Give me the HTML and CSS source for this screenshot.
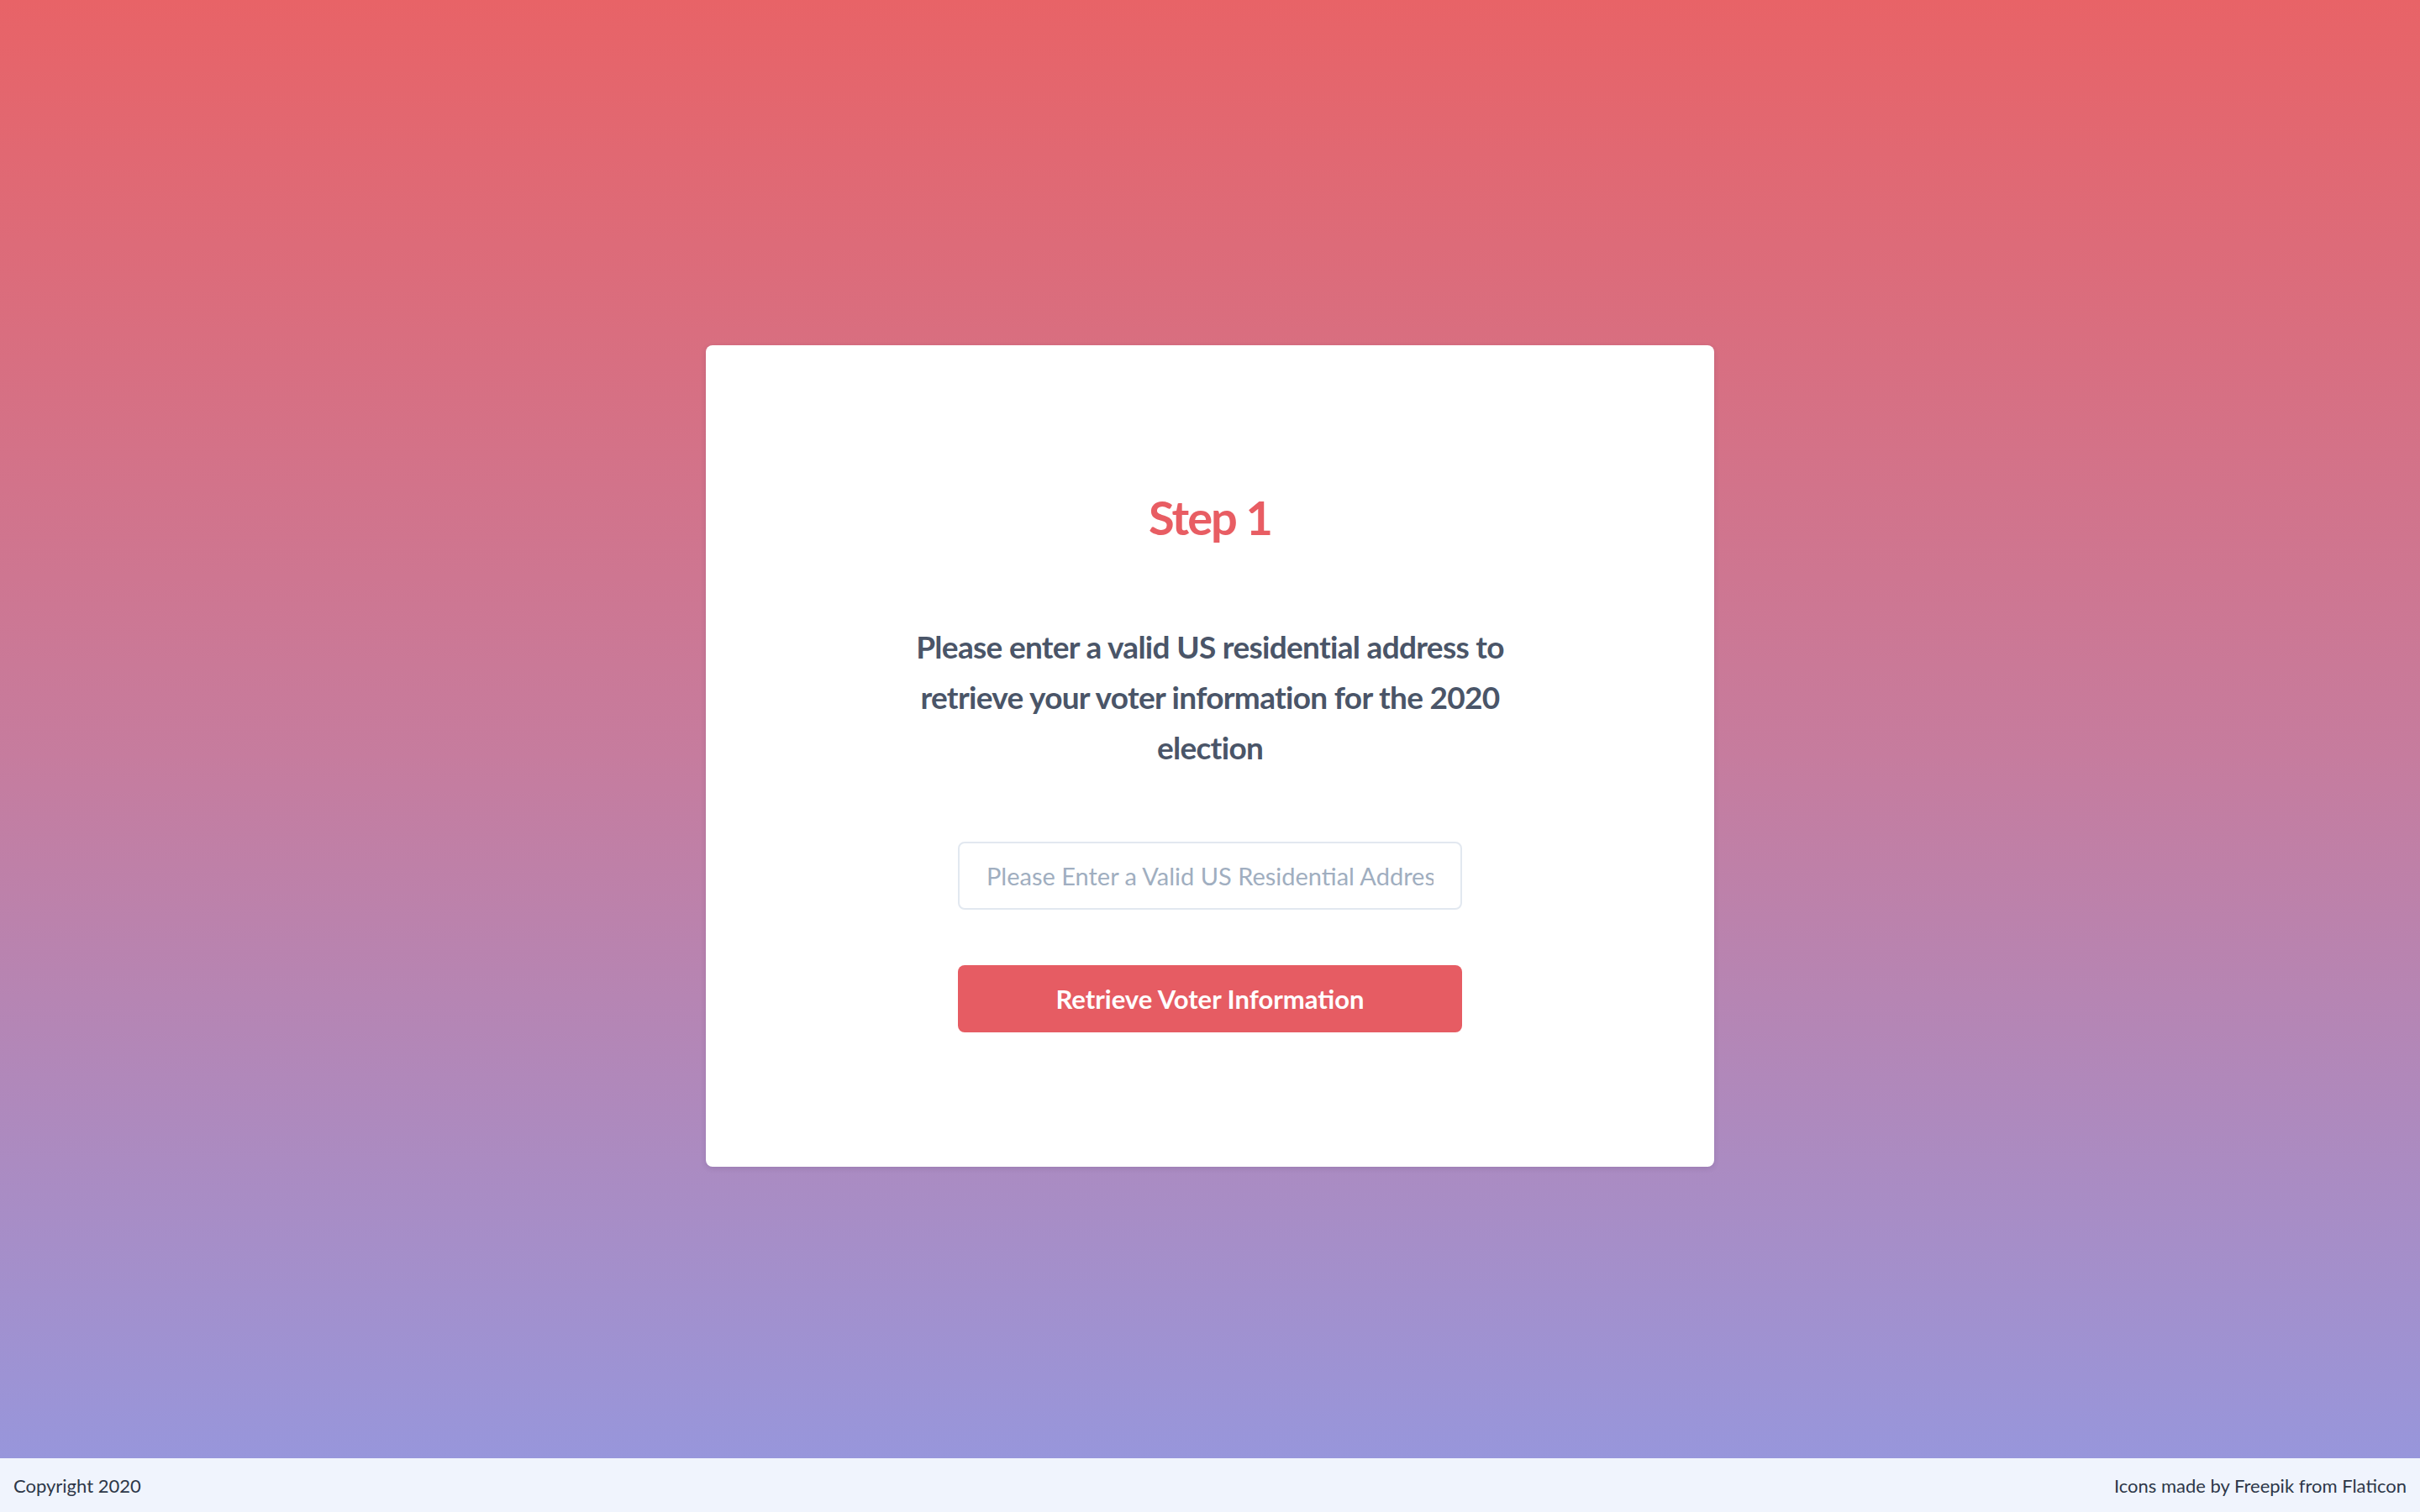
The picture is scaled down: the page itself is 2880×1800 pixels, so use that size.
FILE: index.html
```html
<!DOCTYPE html>
<html lang="en">
<head>
<meta charset="utf-8">
<title>Step 1</title>
<link rel="stylesheet" href="styles.css">
</head>
<body>
<main class="hero">
  <section class="card">
    <h1 class="card-title">Step 1</h1>
    <p class="card-text">Please enter a valid US residential address to retrieve your voter information for the 2020 election</p>
    <form class="card-form">
      <input class="address-input" type="text" placeholder="Please Enter a Valid US Residential Address">
      <button class="submit-btn" type="button">Retrieve Voter Information</button>
    </form>
  </section>
</main>
<footer class="footer">
  <span class="footer-text">Copyright 2020</span>
  <span class="footer-text">Icons made by Freepik from Flaticon</span>
</footer>
</body>
</html>
```
FILE: styles.css
```css
* { box-sizing: border-box; }
html, body { margin: 0; padding: 0; }
body {
  font-family: Lato, "Open Sans", sans-serif;
  min-height: 1800px;
}
.hero {
  height: 1800px;
  background: linear-gradient(180deg, #e86367 0%, #c67c9e 50%, #9498e0 100%);
  display: flex;
  align-items: center;
  justify-content: center;
}
.card {
  width: 1200px;
  background: #ffffff;
  border-radius: 8px;
  box-shadow: 0 2px 6px rgba(60, 40, 90, 0.15);
  padding: 160px 0;
  display: flex;
  flex-direction: column;
  align-items: center;
}
.card-title {
  margin: 0;
  font-size: 56px;
  line-height: 90px;
  font-weight: 700;
  color: #e85d63;
  letter-spacing: -2px;
}
.card-text {
  margin: 79px 0 0;
  width: 720px;
  text-align: center;
  font-size: 37px;
  line-height: 60px;
  font-weight: 700;
  color: #4a5568;
  letter-spacing: -0.7px;
}
.card-form {
  margin-top: 82px;
  display: flex;
  flex-direction: column;
  gap: 66px;
  width: 600px;
}
.address-input {
  width: 600px;
  height: 81px;
  border: 2px solid #e2e8f0;
  border-radius: 8px;
  padding: 0 32px;
  font-family: Lato, "Open Sans", sans-serif;
  font-size: 29px;
  color: #4a5568;
  background: #fff;
  outline: none;
}
.address-input::placeholder {
  color: #a0aec0;
  opacity: 1;
}
.submit-btn {
  width: 600px;
  height: 80px;
  border: none;
  border-radius: 8px;
  background: #e65c63;
  color: #ffffff;
  font-family: Lato, "Open Sans", sans-serif;
  font-size: 31px;
  font-weight: 700;
  cursor: pointer;
}
.footer {
  position: fixed;
  left: 0;
  right: 0;
  bottom: 0;
  height: 64px;
  background: #f0f4fd;
  display: flex;
  align-items: center;
  justify-content: space-between;
  padding: 0 16px;
}
.footer-text {
  font-size: 22px;
  color: #2d3748;
}
```
